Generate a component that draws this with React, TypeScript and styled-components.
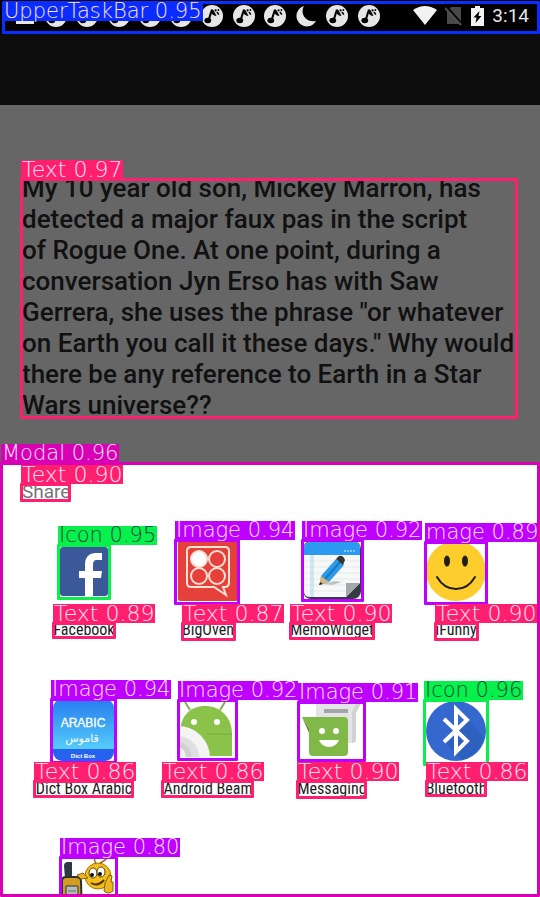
import React from "react";
import styled, { createGlobalStyle } from "styled-components";

const GlobalStyle = createGlobalStyle`
  * { box-sizing: border-box; }
  body { margin: 0; background: #fff; font-family: Roboto, "Liberation Sans", sans-serif; }
`;

const PINK = "#ff1f6e";
const VIOLET = "#bd00ff";
const GREEN = "#08f04c";
const MAGENTA = "#d800b4";
const BLUE = "#0a2cff";

const Screen = styled.div`
  position: relative;
  display: flex;
  flex-direction: column;
  height: 100vh;
  overflow: hidden;
`;

const StatusBar = styled.header`
  position: relative;
  display: flex;
  align-items: center;
  justify-content: space-between;
  height: 34px;
  padding: 0 11px 2px 14px;
  background: #000;
  color: #e6e6e6;
`;

const Notifications = styled.div`
  display: flex;
  align-items: center;
  justify-content: space-between;
  width: 71%;
`;

const SystemIcons = styled.div`
  display: flex;
  align-items: center;
  gap: 8px;
`;

const Clock = styled.time`
  font-size: 19px;
  line-height: 24px;
`;

const AppBar = styled.div`
  height: 71px;
  background: #0c0c0c;
`;

const Story = styled.main`
  position: relative;
  padding: 68px 22px 42px;
  background: #666;
`;

const Question = styled.p`
  margin: 0;
  color: #111;
  font-size: 26px;
  font-weight: 500;
  line-height: 31px;
  white-space: pre;
`;

const Sheet = styled.section`
  position: relative;
  flex: 1;
  min-height: 0;
  padding: 17px 22px 0;
  background: #fff;
`;

const SheetTitle = styled.h2`
  margin: 0 0 36px;
  color: #757575;
  font-size: 19px;
  font-weight: 400;
  line-height: 24px;
`;

const AppGrid = styled.div`
  display: grid;
  grid-template-columns: repeat(4, 1fr);
  grid-auto-rows: 159px;
`;

const AppButton = styled.button`
  position: relative;
  display: flex;
  flex-direction: column;
  align-items: center;
  gap: 18px;
  padding: 0;
  border: 0;
  background: none;
  color: #1c1c1c;
  font-family: "Roboto Condensed", Roboto, sans-serif;
  font-size: 16px;
  line-height: 20px;
  white-space: nowrap;
  cursor: pointer;
`;

const AppIcon = styled.svg`
  display: block;
  flex: none;
  width: 62px;
  height: 62px;
`;

const Frame = styled.span<{ $x: number; $y: number; $w: string; $h: string; $color: string }>`
  position: absolute;
  z-index: 1;
  left: ${(p) => p.$x}px;
  top: ${(p) => p.$y}px;
  width: ${(p) => p.$w};
  height: ${(p) => p.$h};
  border: 3px solid ${(p) => p.$color};
  border-radius: 1px;
  pointer-events: none;
`;

const Tag = styled.span<{ $color: string; $inside: boolean }>`
  position: absolute;
  left: -2px;
  ${(p) => (p.$inside ? "top: -2px;" : "bottom: calc(100% + 2px);")}
  height: 19px;
  padding: 0 1px;
  background: ${(p) => p.$color};
  color: ${(p) => (p.$color === GREEN ? "#0b4a3c" : "#ffe3f6")};
  font-family: "DejaVu Sans Light", "DejaVu Sans", sans-serif;
  font-size: ${(p) => (p.$color === PINK ? 22 : 21)}px;
  font-weight: 200;
  line-height: 19px;
  text-align: left;
  white-space: nowrap;
`;

type MarkProps = { x: number; y: number; w: number | string; h: number | string; color: string; text: string; inside?: boolean };

const size = (v: number | string) => (typeof v === "number" ? `${v}px` : v);

const Mark = ({ x, y, w, h, color, text, inside = false }: MarkProps) => (
  <Frame $x={x} $y={y} $w={size(w)} $h={size(h)} $color={color}>
    <Tag $color={color} $inside={inside}>{text}</Tag>
  </Frame>
);

const NoteIcon = () => (
  <svg width="22" height="22" viewBox="0 0 22 22">
    <circle cx="11" cy="11" r="11" fill="#e6e6e6" />
    <ellipse cx="6.800" cy="15.5" rx="3.4" ry="2.700" fill="#000" />
    <path d="M7.700 15L10.500 6" fill="none" stroke="#000" strokeWidth="2" />
    <path d="M9.600 4.500h2.400l2 3.500 1.500 3-2.500-.5-2.500-2z" fill="#000" />
    <circle cx="14.600" cy="5.400" r="1.100" fill="#000" />
    <circle cx="17.400" cy="5" r=".9" fill="#000" />
    <path d="M16 7l1.800 2.600" stroke="#000" strokeWidth="1.600" />
  </svg>
);

const MailIcon = () => (
  <svg width="22" height="22" viewBox="0 0 22 22"><path d="M2 3h18v16H2z" fill="#e6e6e6" /><path d="M2 5l9 6 9-6" fill="none" stroke="#000" strokeWidth="2" /></svg>
);

const MoonIcon = () => (
  <svg width="22" height="22" viewBox="0 0 22 22"><path d="M9 1A10.4 10.4 0 1 0 21 16C11 18 4.500 9 9 1z" fill="#e6e6e6" /></svg>
);

const WifiIcon = () => (
  <svg width="24" height="20" viewBox="0 0 24 20"><path d="M0 4Q12-4 24 4L12 19z" fill="#f2f2f2" /></svg>
);

const NoSimIcon = () => (
  <svg width="18" height="20" viewBox="0 0 18 20">
    <path d="M6 1h10v17H2V6z" fill="#484848" />
    <path d="M1 0l17 19" stroke="#000" strokeWidth="2" />
    <path d="M0 2l16 17" stroke="#505050" strokeWidth="2" />
  </svg>
);

const BatteryIcon = () => (
  <svg width="13" height="20" viewBox="0 0 13 20">
    <path d="M4 0h5v2h4v18H0V2h4z" fill="#f2f2f2" />
    <path d="M8.500 5L2.500 11.500h3L4.500 17l6-7H7.500z" fill="#000" />
  </svg>
);

const Facebook = () => (
  <AppIcon viewBox="0 0 62 62">
    <rect x="7" y="7" width="48" height="49" rx="3" fill="#3b5998" />
    <path d="M32 56V38h-6v-7h6v-6c0-8 4-12 11-12h6v7h-5c-3 0-4 2-4 5v6h9l-1 7h-8v18z" fill="#fff" />
  </AppIcon>
);

const BigOven = () => (
  <AppIcon viewBox="0 0 62 62">
    <rect x="1" y="1" width="60" height="60" rx="2" fill="#e5403a" />
    <g fill="none" stroke="#ffe1d6" strokeWidth="2">
      <path d="M14 7h34q4 0 4 4v31q0 5-4 5h-2l3 8-12-8H14q-4 0-4-4V11q0-4 4-4z" />
      <circle cx="22" cy="19" r="8" fill="#fff" /><circle cx="40" cy="19" r="8" />
      <circle cx="22" cy="36" r="8" /><circle cx="40" cy="36" r="8" />
    </g>
  </AppIcon>
);

const Memo = () => (
  <AppIcon viewBox="0 0 62 62">
    <rect x="2" y="1" width="58" height="58" rx="8" fill="#353b42" />
    <path d="M3 9q0-7 7-7h42q7 0 7 7v34L45 57H9q-6 0-6-6z" fill="#f7f8f8" />
    <path d="M3 15V9q0-7 7-7h42q7 0 7 7v6z" fill="#2c9af0" />
    <path d="M43 11h12" stroke="#9ed4ff" strokeWidth="1.500" strokeDasharray="2 1" />
    <path d="M3 21h56M3 27h56M3 33h56M3 39h56M3 45h44M3 51h42" stroke="#e2eaec" />
    <path d="M10 15v42M12 15v42" stroke="#a8d4f0" />
    <path d="M45 43h14L45 57z" fill="#a5a8aa" />
    <path d="M22 44l12-3 7 1-10 3z" fill="#bfc1c1" />
    <path d="M20 36l15-17 8 6-15 17-9 3z" fill="#2f9be8" />
    <path d="M24 39l15-17" stroke="#1779c5" strokeWidth="2" />
    <path d="M35 19l3-3q4-1 6 4l-2 5z" fill="#343536" />
    <path d="M20 36l8 6-9 3z" fill="#dfb47a" /><path d="M19 42l3 2-4 1z" fill="#222" />
  </AppIcon>
);

const Funny = () => (
  <AppIcon viewBox="0 0 62 62">
    <circle cx="31" cy="31" r="30" fill="#fdcc2d" />
    <ellipse cx="22" cy="21" rx="3" ry="5.500" fill="#201e16" /><ellipse cx="40" cy="21" rx="3" ry="5.500" fill="#201e16" />
    <path d="M12 37q7 12 19 12t19-12" fill="none" stroke="#201e16" strokeWidth="2" strokeLinecap="round" />
  </AppIcon>
);

const DictBox = () => (
  <AppIcon viewBox="0 0 62 62">
    <defs>
      <linearGradient id="sky" x1="0" y1="0" x2="0" y2="1"><stop stopColor="#287cf0" /><stop offset="1" stopColor="#54cdfa" /></linearGradient>
      <clipPath id="tile"><rect x="0" y="0" width="61" height="62" rx="9" /></clipPath>
    </defs>
    <g clipPath="url(#tile)"><path d="M0 0h62v50H0z" fill="url(#sky)" /><path d="M0 50h62v12H0z" fill="#2563ee" /></g>
    <g fill="#fff" textAnchor="middle" fontFamily="Liberation Sans, sans-serif">
      <text x="30" y="28" fontSize="12" stroke="#fff" strokeWidth=".3">ARABIC</text>
      <text x="29" y="43" fontSize="11" fontFamily="DejaVu Sans, sans-serif">قاموس</text>
      <text x="30" y="59" fontSize="6" fontWeight="700">Dict Box</text>
    </g>
  </AppIcon>
);

const Beam = () => (
  <AppIcon viewBox="0 0 62 62">
    <path d="M13 11L8 3M43 11l5-8" stroke="#83ad55" strokeWidth="2" />
    <path d="M3 35C3 16 14 7 28 7s27 10 27 28v22H3z" fill="#8bc34a" />
    <path d="M30 35h25" stroke="#76a843" />
    <circle cx="17" cy="23" r="3" fill="#fff" /><circle cx="40" cy="23" r="3" fill="#fff" />
    <path d="M1 27a32 32 0 0 1 32 31H1z" fill="#f4f4f4" />
    <path d="M1 37a21 21 0 0 1 21 21H1z" fill="#dedfe0" />
    <path d="M1 43a14 14 0 0 1 13 15H1z" fill="#cfd0d2" />
    <path d="M1 48q7 1 8 10H1z" fill="#f0f0f0" />
  </AppIcon>
);

const Messaging = () => (
  <AppIcon viewBox="0 0 62 62">
    <path d="M15 4h45l-5 10v26q0 4-4 4H19q-4 0-4-4z" fill="#e3e4e5" />
    <path d="M55 14l5-10h-4l-5 9v31q4 0 4-4z" fill="#cfd1d2" />
    <path d="M23 10h24v4H23z" fill="#a2a6a8" />
    <path d="M1 18h42q4 0 4 4v31q0 4-4 4H12q-4 0-4-4V29z" fill="#80b947" />
    <path d="M1 18l7 11v5z" fill="#61933a" />
    <circle cx="21" cy="32" r="3" fill="#fff" /><circle cx="35" cy="32" r="3" fill="#fff" />
    <path d="M18 41h20q-3 7-10 7t-10-7z" fill="#fff" />
  </AppIcon>
);

const Bluetooth = () => (
  <AppIcon viewBox="0 0 62 62">
    <circle cx="31" cy="32" r="30" fill="#3568ce" />
    <path d="M43 21l16 17q-5 17-22 23L20 44l10-12z" fill="#2858b2" opacity=".5" />
    <path d="M19 20l23 22-11 11V10l11 11-23 22" fill="none" stroke="#fff" strokeWidth="4" />
  </AppIcon>
);

const Geocaching = () => (
  <AppIcon viewBox="0 0 62 62">
    <path d="M12 20l-1-12q0-4 4-4h4v17z" fill="#2d3944" />
    <path d="M9 23q0-4 4-4h10q5 0 5 4l1 39H9z" fill="#d39c22" stroke="#2d3030" strokeWidth="2" />
    <path d="M13 28h12v34H13z" fill="#b4bfba" stroke="#333" />
    <path d="M15 33h8M15 38h8M15 43h8" stroke="#66756f" />
    <circle cx="45" cy="18" r="13" fill="#f4bd1b" stroke="#a57605" />
    <path d="M43 5q-3-3 0-5M47 5q5-2 7-5" fill="none" stroke="#936a09" strokeWidth="1.500" />
    <ellipse cx="40" cy="15" rx="4" ry="5" fill="#fff" stroke="#574206" /><ellipse cx="48" cy="14" rx="4" ry="5" fill="#fff" stroke="#574206" />
    <circle cx="39" cy="17" r="2" fill="#111" /><circle cx="47" cy="16" r="2" fill="#111" />
    <path d="M38 25q7 4 13-3" fill="none" stroke="#4c3700" strokeWidth="2" />
    <path d="M24 17l6-2 5 5-7 1z" fill="#eab32a" stroke="#8b6500" />
    <path d="M52 25l4-8 3 1-1 6h2v9q-5 4-9 0z" fill="#eeb71f" stroke="#886000" />
  </AppIcon>
);

const apps: { name: string; Icon: React.FC; marks: MarkProps[] }[] = [
  { name: "Facebook", Icon: Facebook, marks: [
    { x: 35, y: 4, w: 54, h: 56, color: GREEN, text: "Icon 0.95" },
    { x: 30, y: 82, w: 64, h: 17, color: PINK, text: "Text 0.89" } ] },
  { name: "BigOven", Icon: BigOven, marks: [
    { x: 28, y: -1, w: 66, h: 66, color: VIOLET, text: "Image 0.94" },
    { x: 35, y: 82, w: 55, h: 19, color: PINK, text: "Text 0.87" } ] },
  { name: "MemoWidget", Icon: Memo, marks: [
    { x: 31, y: -1, w: 63, h: 63, color: VIOLET, text: "Image 0.92" },
    { x: 19, y: 82, w: 86, h: 18, color: PINK, text: "Text 0.90" } ] },
  { name: "iFunny", Icon: Funny, marks: [
    { x: 30, y: 1, w: 64, h: 64, color: VIOLET, text: "mage 0.89" },
    { x: 40, y: 82, w: 45, h: 19, color: PINK, text: "Text 0.90" } ] },
  { name: "Dict Box Arabic", Icon: DictBox, marks: [
    { x: 28, y: -1, w: 67, h: 66, color: VIOLET, text: "Image 0.94" },
    { x: 11, y: 81, w: 101, h: 18, color: PINK, text: "Text 0.86" } ] },
  { name: "Android Beam", Icon: Beam, marks: [
    { x: 31, y: 0, w: 61, h: 62, color: VIOLET, text: "Image 0.92" },
    { x: 15, y: 81, w: 93, h: 18, color: PINK, text: "Text 0.86" } ] },
  { name: "Messaging", Icon: Messaging, marks: [
    { x: 27, y: 2, w: 69, h: 61, color: VIOLET, text: "Image 0.91" },
    { x: 26, y: 81, w: 71, h: 19, color: PINK, text: "Text 0.90" } ] },
  { name: "Bluetooth", Icon: Bluetooth, marks: [
    { x: 29, y: 0, w: 66, h: 67, color: GREEN, text: "Icon 0.96" },
    { x: 31, y: 81, w: 62, h: 17, color: PINK, text: "Text 0.86" } ] },
  { name: "", Icon: Geocaching, marks: [
    { x: 37, y: -2, w: 59, h: 66, color: VIOLET, text: "Image 0.80" } ] },
];

const question = `My 10 year old son, Mickey Marron, has
detected a major faux pas in the script
of Rogue One. At one point, during a
conversation Jyn Erso has with Saw
Gerrera, she uses the phrase "or whatever
on Earth you call it these days." Why would
there be any reference to Earth in a Star
Wars universe??`;

export default function App() {
  return (
    <Screen>
      <GlobalStyle />
      <StatusBar>
        <Notifications>
          <MailIcon />
          {Array.from({ length: 8 }, (_, i) => <NoteIcon key={i} />)}
          <MoonIcon />
          <NoteIcon />
          <NoteIcon />
        </Notifications>
        <SystemIcons>
          <WifiIcon />
          <NoSimIcon />
          <BatteryIcon />
          <Clock>3:14</Clock>
        </SystemIcons>
        <Mark x={2} y={1} w="calc(100% - 2px)" h={33} color={BLUE} text="UpperTaskBar 0.95" inside />
      </StatusBar>
      <AppBar />
      <Story>
        <Question>{question}</Question>
        <Mark x={20} y={73} w="calc(100% - 42px)" h={241} color={PINK} text="Text 0.97" />
      </Story>
      <Sheet role="dialog" aria-labelledby="share-title">
        <SheetTitle id="share-title">Share</SheetTitle>
        <AppGrid>
          {apps.map(({ name, Icon, marks }) => (
            <AppButton key={name} type="button" aria-label={name || "Geocaching"}>
              <Icon />
              {name}
              {marks.map((mark) => <Mark key={mark.text} {...mark} />)}
            </AppButton>
          ))}
        </AppGrid>
        <Mark x={0} y={-1} w="100%" h="calc(100% + 1px)" color={MAGENTA} text="Modal 0.96" />
        <Mark x={20} y={20} w={51} h={19} color={PINK} text="Text 0.90" />
      </Sheet>
    </Screen>
  );
}
